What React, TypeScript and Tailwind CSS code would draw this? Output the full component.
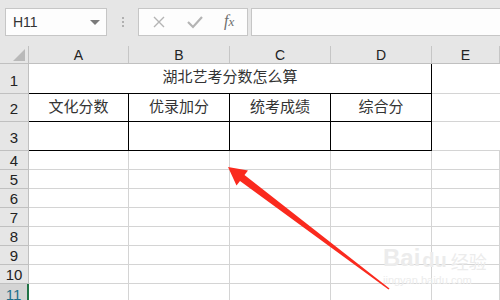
import React from "react";

const cols = ["A", "B", "C", "D", "E"];
const gridCols = "grid grid-cols-[29px_100px_101px_101px_101px_1fr]";
const cjk = "font-['Noto_Sans_CJK_SC','Noto_Sans',sans-serif]";
const smallRows = ["4", "5", "6", "7", "8", "9", "10"];

const App = () => {
  return (
    <div className={`relative w-[500px] h-[300px] overflow-hidden bg-white ${cjk}`}>
      {/* Toolbar: name box + formula bar */}
      <div className="h-[46px] bg-[#e6e6e6] flex items-start pt-[8px] pl-[5px]">
        <div className="w-[102px] h-[28px] bg-[#fdfdfd] border border-[#c6c6c6] flex items-center justify-between pl-[7px] pr-[6px]">
          <span className="text-[14px] text-[#333] font-['Liberation_Sans',sans-serif]">H11</span>
          <span className="w-0 h-0 border-l-[5px] border-r-[5px] border-t-[5px] border-l-transparent border-r-transparent border-t-[#7a7a7a]" />
        </div>
        <div className="w-[31px] h-[28px] flex flex-col items-center justify-center gap-[2px]">
          <span className="w-[2px] h-[2px] bg-[#b0b0b0]" />
          <span className="w-[2px] h-[2px] bg-[#b0b0b0]" />
          <span className="w-[2px] h-[2px] bg-[#b0b0b0]" />
        </div>
        <div className="w-[110px] h-[28px] bg-[#fdfdfd] border border-[#c6c6c6] flex items-center">
          <svg width="80" height="26" viewBox="0 0 80 26">
            <path d="M15 8 L25 18 M25 8 L15 18" stroke="#b4b4b4" strokeWidth="1.4" fill="none" />
            <path d="M49 13 L54 18 L63 8" stroke="#b4b4b4" strokeWidth="2.2" fill="none" />
          </svg>
          <span className="ml-[5px] text-[16px] italic text-[#6e6e6e] font-['Liberation_Serif',serif] leading-none pb-[2px]">
            f<span className="text-[13px]">x</span>
          </span>
        </div>
        <div className="ml-[3px] flex-1 h-[28px] bg-[#fdfdfd] border border-[#c6c6c6] border-r-0" />
      </div>

      {/* Column headers */}
      <div className={`${gridCols} h-[18px] bg-[#e6e6e6] border-b border-[#c0c0c0] text-[14px] text-[#222] font-['Liberation_Sans',sans-serif]`}>
        <div className="relative border-r border-[#c0c0c0]">
          <svg className="absolute right-[3px] bottom-[2px]" width="12" height="12" viewBox="0 0 12 12">
            <polygon points="12,0 12,12 0,12" fill="#b9b9b9" />
          </svg>
        </div>
        {cols.map((c) => (
          <div key={c} className="flex items-end justify-center leading-[16px] border-r border-[#c6c6c6] pt-[1px]">
            {c}
          </div>
        ))}
      </div>

      {/* Row 1 */}
      <div className={`${gridCols} h-[30px]`}>
        <div className="bg-[#e6e6e6] border-r border-b border-[#c0c0c0] flex items-end justify-center pb-[1px] text-[15px] text-[#222] font-['Liberation_Sans',sans-serif]">1</div>
        <div className="col-span-4 border-r border-b border-black flex items-center justify-center text-[15px] text-[#333] pb-[4px]">
          湖北艺考分数怎么算
        </div>
        <div className="border-b border-[#d4d4d4]" />
      </div>

      {/* Row 2 */}
      <div className={`${gridCols} h-[28px]`}>
        <div className="bg-[#e6e6e6] border-r border-b border-[#c0c0c0] flex items-end justify-center pb-[1px] text-[15px] text-[#222] font-['Liberation_Sans',sans-serif]">2</div>
        {["文化分数", "优录加分", "统考成绩", "综合分"].map((t) => (
          <div key={t} className="border-r border-b border-black flex items-center justify-center text-[15px] text-[#333] pb-[2px]">
            {t}
          </div>
        ))}
        <div className="border-b border-[#d4d4d4]" />
      </div>

      {/* Row 3 */}
      <div className={`${gridCols} h-[29px]`}>
        <div className="bg-[#e6e6e6] border-r border-b border-[#c0c0c0] flex items-end justify-center pb-[1px] text-[15px] text-[#222] font-['Liberation_Sans',sans-serif]">3</div>
        {[0, 1, 2, 3].map((i) => (
          <div key={i} className="border-r border-b border-black" />
        ))}
        <div className="border-b border-[#d4d4d4]" />
      </div>

      {/* Rows 4-10 */}
      {smallRows.map((r) => (
        <div key={r} className={`${gridCols} h-[19px]`}>
          <div className="bg-[#e6e6e6] border-r border-b border-[#c0c0c0] flex items-end justify-center leading-[17px] text-[15px] text-[#222] font-['Liberation_Sans',sans-serif]">{r}</div>
          {cols.map((c) => (
            <div key={c} className="border-r border-b border-[#d4d4d4]" />
          ))}
        </div>
      ))}

      {/* Row 11 (selected) */}
      <div className={`${gridCols} h-[19px]`}>
        <div className="bg-[#d4d4d4] border-r-2 border-[#217346] flex items-end justify-center leading-[17px] text-[15px] text-[#1f6f8b] font-['Liberation_Sans',sans-serif]">11</div>
        {cols.map((c) => (
          <div key={c} className="border-r border-[#d4d4d4]" />
        ))}
      </div>

      {/* Baidu watermark */}
      <div className="absolute left-[383px] top-[246px] flex flex-col items-start text-[#ececec] pointer-events-none">
        <div className="flex items-end gap-[2px] leading-none">
          <span className="text-[24px] font-bold font-['Liberation_Sans',sans-serif]">Bai</span>
          <span className="text-[20px] font-bold font-['Liberation_Sans',sans-serif]">du</span>
          <span className="text-[18px] ml-[2px]">经验</span>
        </div>
        <span className="text-[11px] mt-[2px] font-['Liberation_Sans',sans-serif]">jingyan.baidu.com</span>
      </div>

      {/* Red arrow annotation */}
      <svg className="absolute left-0 top-0 pointer-events-none" width="500" height="300" viewBox="0 0 500 300">
        <polygon
          points="228,167 248,170.5 244.5,175 389.5,288.5 388.5,289.5 240,181 236.5,185.5"
          fill="#fa2a1e"
        />
      </svg>
    </div>
  );
};

export default App;
